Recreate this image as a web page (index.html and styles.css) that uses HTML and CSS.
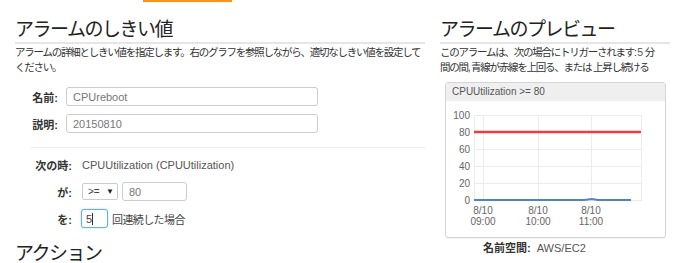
FILE: index.html
```html
<!DOCTYPE html>
<html lang="ja">
<head>
<meta charset="UTF-8">
<meta name="viewport" content="width=device-width, initial-scale=1.0">
<title>アラームのしきい値</title>
<link rel="stylesheet" href="styles.css">
</head>
<body>
    <div class="tabs"><span class="tab-active"></span></div>

    <div class="page">
        <section class="threshold">
            <h2>アラームのしきい値</h2>
            <p class="desc">アラームの詳細としきい値を指定します。右のグラフを参照しながら、適切なしきい値を設定してください。</p>

            <div class="fields">
                <div class="field">
                    <label>名前:</label>
                    <span class="input wide">CPUreboot</span>
                </div>
                <div class="field">
                    <label>説明:</label>
                    <span class="input wide">20150810</span>
                </div>
            </div>

            <div class="sep"></div>

            <div class="cond">
                <div class="cond-row">
                    <label>次の時:</label>
                    <span class="metric">CPUUtilization (CPUUtilization)</span>
                </div>
                <div class="cond-row">
                    <label>が:</label>
                    <span class="select">&gt;= <i>▼</i></span>
                    <span class="input num">80</span>
                </div>
                <div class="cond-row">
                    <label>を:</label>
                    <span class="input periods focus">5<span class="caret"></span></span>
                    <span class="suffix">回連続した場合</span>
                </div>
            </div>

            <h2 class="actions">アクション</h2>
        </section>

        <aside class="preview">
            <h2>アラームのプレビュー</h2>
            <p class="desc">このアラームは、次の場合にトリガーされます: <span class="num-text">5</span> 分<br>間の間, 青線が赤線を上回る、または 上昇し続ける</p>

            <div class="chart">
                <div class="chart-title">CPUUtilization &gt;= 80</div>
                <svg class="chart-plot" width="219" height="136" viewBox="0 0 219 136">
                    <g stroke="#ececec" stroke-width="1">
                        <line x1="28" y1="14.5" x2="195" y2="14.5"/>
                        <line x1="28" y1="31.5" x2="195" y2="31.5"/>
                        <line x1="28" y1="48.5" x2="195" y2="48.5"/>
                        <line x1="28" y1="65.5" x2="195" y2="65.5"/>
                        <line x1="28" y1="82.5" x2="195" y2="82.5"/>
                        <line x1="28" y1="99.5" x2="195" y2="99.5"/>
                        <line x1="28.5" y1="14" x2="28.5" y2="100"/>
                        <line x1="37.5" y1="14" x2="37.5" y2="100"/>
                        <line x1="92.5" y1="14" x2="92.5" y2="100"/>
                        <line x1="145.5" y1="14" x2="145.5" y2="100"/>
                        <line x1="195.5" y1="14" x2="195.5" y2="100"/>
                    </g>
                    <g class="axis" text-anchor="end">
                        <text x="24" y="18">100</text>
                        <text x="24" y="35">80</text>
                        <text x="24" y="52">60</text>
                        <text x="24" y="69">40</text>
                        <text x="24" y="86">20</text>
                        <text x="24" y="103">0</text>
                    </g>
                    <g class="axis" text-anchor="middle">
                        <text x="37" y="113">8/10</text>
                        <text x="37" y="124">09:00</text>
                        <text x="92" y="113">8/10</text>
                        <text x="92" y="124">10:00</text>
                        <text x="145" y="113">8/10</text>
                        <text x="145" y="124">11:00</text>
                    </g>
                    <line x1="28" y1="31" x2="195" y2="31" stroke="#f03c3c" stroke-width="2.5"/>
                    <polyline points="28,99 100,99 138,99 146,98 152,99 185,99" fill="none" stroke="#4a86c8" stroke-width="1.8"/>
                </svg>
            </div>

            <div class="namespace">
                <label>名前空間:</label>
                <span>AWS/EC2</span>
            </div>
        </aside>
    </div>
</body>
</html>
```

FILE: styles.css
```css
body {
    margin: 0;
    padding: 0;
    font-family: "Liberation Sans", "Noto Sans CJK JP", sans-serif;
    font-size: 11px;
    color: #333;
    background: #fff;
    overflow: hidden;
}
.tabs {
    height: 2px;
}
.tab-active {
    display: block;
    margin-left: 143px;
    width: 89px;
    height: 2px;
    background: #f7941d;
}
.page {
    display: flex;
    gap: 15px;
    padding: 0 15px;
}
.threshold {
    width: 410px;
}
.preview {
    width: 230px;
}
h2 {
    margin: 16px 0 0;
    padding-bottom: 1px;
    font-size: 19px;
    line-height: 23px;
    font-weight: normal;
    letter-spacing: -1.5px;
    color: #222;
    border-bottom: 2px solid #e6e6e6;
}
.desc {
    margin: 1px 0 0;
    font-size: 10.5px;
    line-height: 15px;
    letter-spacing: -1.25px;
    white-space: nowrap;
}
.threshold .desc {
    white-space: normal;
}
.num-text {
    color: #555;
    letter-spacing: 0;
}

/* 名前 / 説明 */
.fields {
    margin-top: 12px;
    display: flex;
    flex-direction: column;
    gap: 8px;
}
.field {
    display: grid;
    grid-template-columns: 43px 1fr;
    gap: 8px;
    align-items: center;
}
label {
    font-weight: bold;
    text-align: right;
    color: #333;
}
.input {
    display: inline-flex;
    align-items: center;
    box-sizing: border-box;
    height: 19px;
    padding: 0 6px;
    border: 1px solid #ccc;
    border-radius: 3px;
    color: #777;
    font-size: 11px;
    background: #fff;
}
.input.wide {
    width: 252px;
}
.sep {
    margin: 14px 0 0 16px;
    height: 1px;
    background: #ececec;
}

/* 条件 */
.cond {
    margin-top: 7px;
    display: flex;
    flex-direction: column;
    gap: 8px;
}
.cond-row {
    display: flex;
    align-items: center;
    height: 19px;
}
.cond-row label {
    width: 57px;
    margin-right: 10px;
}
.metric {
    color: #555;
}
.select {
    display: inline-flex;
    align-items: center;
    justify-content: space-between;
    box-sizing: border-box;
    width: 36px;
    height: 17px;
    padding: 0 3px 0 5px;
    border: 1px solid #ccc;
    border-radius: 2px;
    color: #444;
    font-size: 10px;
}
.select i {
    font-style: normal;
    font-size: 8px;
    color: #222;
}
.input.num {
    width: 65px;
    margin-left: 4px;
}
.input.periods {
    width: 27px;
    padding: 0 4px;
    margin-left: -1px;
    color: #444;
}
.input.focus {
    border-color: #66afe9;
    box-shadow: 0 0 2px rgba(102, 175, 233, 0.6);
}
.caret {
    display: inline-block;
    width: 1px;
    height: 12px;
    background: #333;
}
.suffix {
    margin-left: 4px;
    color: #444;
    letter-spacing: -0.6px;
}
.actions {
    margin-top: 14px;
    border-bottom: none;
}

/* グラフ */
.chart {
    margin: 7px 4px 0 5px;
    border: 1px solid #d5d5d5;
    border-radius: 3px;
    box-shadow: 0 1px 1px rgba(0, 0, 0, 0.06);
}
.chart-title {
    height: 18px;
    line-height: 18px;
    padding-left: 6px;
    background: #efefef;
    color: #555;
    font-size: 10px;
}
.chart-plot {
    display: block;
}
.axis text {
    font-family: "Liberation Sans", sans-serif;
    font-size: 10px;
    fill: #666;
}
.namespace {
    margin-top: 3px;
    padding-left: 43px;
    display: flex;
    gap: 6px;
    line-height: 15px;
}
.namespace span {
    color: #555;
}
```
